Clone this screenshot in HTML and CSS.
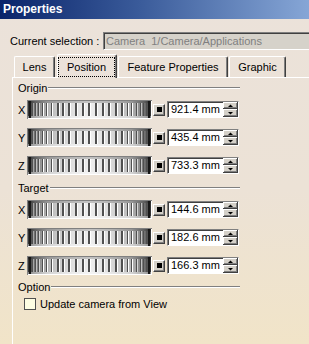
FILE: index.html
```html
<!DOCTYPE html>
<html lang="en">
<head>
    <meta charset="UTF-8">
    <meta name="viewport" content="width=device-width, initial-scale=1.0">
    <title>Properties</title>
    <link rel="stylesheet" href="styles.css">
</head>
<body>
    <!-- shared drawings: thumbwheel and spinner -->
    <svg class="defs" width="0" height="0">
        <defs>
            <linearGradient id="wheel-shade" x1="0" y1="0" x2="1" y2="0">
                <stop offset="0" stop-color="#303030"/>
                <stop offset="0.05" stop-color="#707070"/>
                <stop offset="0.16" stop-color="#b8b8b8"/>
                <stop offset="0.35" stop-color="#dedede"/>
                <stop offset="0.5" stop-color="#eeeeee"/>
                <stop offset="0.65" stop-color="#dedede"/>
                <stop offset="0.84" stop-color="#b8b8b8"/>
                <stop offset="0.95" stop-color="#707070"/>
                <stop offset="1" stop-color="#303030"/>
            </linearGradient>
        </defs>
        <symbol id="wheel" viewBox="0 0 125 19" shape-rendering="crispEdges">
            <rect x="0" y="0" width="125" height="19" fill="#808080"/>
            <rect x="1" y="1" width="124" height="18" fill="#ffffff"/>
            <rect x="1" y="1" width="123" height="17" fill="url(#wheel-shade)"/>
            <rect x="1" y="1" width="123" height="2" fill="#000" opacity="0.18"/>
            <rect x="1" y="16" width="123" height="2" fill="#fff" opacity="0.4"/>
            <rect x="2" y="1" width="2" height="17" fill="#181818"/>
            <rect x="121" y="1" width="2" height="17" fill="#181818"/>
            <g fill="#505050">
                <rect x="5" y="3" width="1" height="13"/>
                <rect x="8" y="3" width="1" height="13"/>
                <rect x="11" y="3" width="1" height="13"/>
                <rect x="15" y="3" width="1" height="13"/>
                <rect x="19" y="3" width="1" height="13"/>
                <rect x="24" y="3" width="1" height="13"/>
                <rect x="30" y="3" width="2" height="13"/>
                <rect x="35" y="3" width="2" height="13"/>
                <rect x="41" y="3" width="2" height="13"/>
                <rect x="48" y="3" width="2" height="13"/>
                <rect x="55" y="3" width="2" height="13"/>
                <rect x="61" y="3" width="2" height="13"/>
                <rect x="68" y="3" width="2" height="13"/>
                <rect x="75" y="3" width="2" height="13"/>
                <rect x="81" y="3" width="2" height="13"/>
                <rect x="88" y="3" width="2" height="13"/>
                <rect x="94" y="3" width="2" height="13"/>
                <rect x="100" y="3" width="1" height="13"/>
                <rect x="104" y="3" width="1" height="13"/>
                <rect x="109" y="3" width="1" height="13"/>
                <rect x="113" y="3" width="1" height="13"/>
                <rect x="116" y="3" width="1" height="13"/>
                <rect x="119" y="3" width="1" height="13"/>
            </g>
            <g fill="#ffffff">
                <rect x="6" y="3" width="1" height="13" opacity="0.4"/>
                <rect x="9" y="3" width="1" height="13" opacity="0.5"/>
                <rect x="12" y="3" width="1" height="13" opacity="0.6"/>
                <rect x="16" y="3" width="1" height="13"/>
                <rect x="20" y="3" width="1" height="13"/>
                <rect x="25" y="3" width="1" height="13"/>
                <rect x="32" y="3" width="1" height="13"/>
                <rect x="37" y="3" width="1" height="13"/>
                <rect x="43" y="3" width="1" height="13"/>
                <rect x="50" y="3" width="1" height="13"/>
                <rect x="57" y="3" width="1" height="13"/>
                <rect x="63" y="3" width="1" height="13"/>
                <rect x="70" y="3" width="1" height="13"/>
                <rect x="77" y="3" width="1" height="13"/>
                <rect x="83" y="3" width="1" height="13"/>
                <rect x="90" y="3" width="1" height="13"/>
                <rect x="96" y="3" width="1" height="13"/>
                <rect x="101" y="3" width="1" height="13"/>
                <rect x="105" y="3" width="1" height="13"/>
                <rect x="110" y="3" width="1" height="13" opacity="0.6"/>
                <rect x="114" y="3" width="1" height="13" opacity="0.5"/>
            </g>
        </symbol>
        <symbol id="spinner" viewBox="0 0 15 15" shape-rendering="crispEdges">
            <rect x="0" y="0" width="15" height="7" fill="#404040"/>
            <rect x="0" y="0" width="14" height="6" fill="#ffffff"/>
            <rect x="1" y="1" width="13" height="5" fill="#808080"/>
            <rect x="1" y="1" width="12" height="4" fill="#d4d0c8"/>
            <polygon points="5,5 10,5 7.5,2.5" fill="#000" shape-rendering="auto"/>
            <rect x="0" y="7" width="15" height="8" fill="#404040"/>
            <rect x="0" y="7" width="14" height="7" fill="#ffffff"/>
            <rect x="1" y="8" width="13" height="6" fill="#808080"/>
            <rect x="1" y="8" width="12" height="5" fill="#d4d0c8"/>
            <polygon points="5,10 10,10 7.5,12.5" fill="#000" shape-rendering="auto"/>
        </symbol>
    </svg>

    <div class="titlebar">Properties</div>

    <div class="selection">
        <span class="selection-label">Current selection :</span>
        <div class="selection-field">Camera  1/Camera/Applications</div>
    </div>

    <div class="tabs">
        <div class="tab tab-lens">Lens</div>
        <div class="tab tab-active"><span class="focus">Position</span></div>
        <div class="tab tab-feature">Feature Properties</div>
        <div class="tab tab-graphic">Graphic</div>
    </div>

    <div class="panel">
        <div class="legend legend-origin"><span>Origin</span></div>
        <div class="rows">
            <div class="row">
                <span class="axis">X</span>
                <svg class="wheel" width="125" height="19"><use href="#wheel"/></svg>
                <span class="dot-btn"></span>
                <div class="spin-edit"><span class="value">921.4 mm</span><svg class="spinner" width="15" height="15"><use href="#spinner"/></svg></div>
            </div>
            <div class="row">
                <span class="axis">Y</span>
                <svg class="wheel" width="125" height="19"><use href="#wheel"/></svg>
                <span class="dot-btn"></span>
                <div class="spin-edit"><span class="value">435.4 mm</span><svg class="spinner" width="15" height="15"><use href="#spinner"/></svg></div>
            </div>
            <div class="row">
                <span class="axis">Z</span>
                <svg class="wheel" width="125" height="19"><use href="#wheel"/></svg>
                <span class="dot-btn"></span>
                <div class="spin-edit"><span class="value">733.3 mm</span><svg class="spinner" width="15" height="15"><use href="#spinner"/></svg></div>
            </div>
        </div>

        <div class="legend legend-target"><span>Target</span></div>
        <div class="rows">
            <div class="row">
                <span class="axis">X</span>
                <svg class="wheel" width="125" height="19"><use href="#wheel"/></svg>
                <span class="dot-btn"></span>
                <div class="spin-edit"><span class="value">144.6 mm</span><svg class="spinner" width="15" height="15"><use href="#spinner"/></svg></div>
            </div>
            <div class="row">
                <span class="axis">Y</span>
                <svg class="wheel" width="125" height="19"><use href="#wheel"/></svg>
                <span class="dot-btn"></span>
                <div class="spin-edit"><span class="value">182.6 mm</span><svg class="spinner" width="15" height="15"><use href="#spinner"/></svg></div>
            </div>
            <div class="row">
                <span class="axis">Z</span>
                <svg class="wheel" width="125" height="19"><use href="#wheel"/></svg>
                <span class="dot-btn"></span>
                <div class="spin-edit"><span class="value">166.3 mm</span><svg class="spinner" width="15" height="15"><use href="#spinner"/></svg></div>
            </div>
        </div>

        <div class="legend legend-option"><span>Option</span></div>
        <label class="check-row">
            <span class="checkbox"></span>
            <span>Update camera from View</span>
        </label>
    </div>
</body>
</html>
```

FILE: styles.css
```css
body {
    margin: 0;
    width: 309px;
    height: 344px;
    overflow: hidden;
    font-family: "Liberation Sans", Arial, sans-serif;
    font-size: 11px;
    color: #000;
    background: linear-gradient(to bottom, #ebe2da 0%, #ece2d6 55%, #f1e4c8 100%);
}
.defs {
    display: block;
    width: 0;
    height: 0;
}
.titlebar {
    height: 19px;
    line-height: 19px;
    padding-left: 3px;
    font-size: 12px;
    font-weight: bold;
    color: #fff;
    background: linear-gradient(to right, #0a246a 0%, #3a5b9a 45%, #86a6d6 100%);
}
.selection {
    display: flex;
    align-items: center;
    margin-top: 13px;
    padding-left: 10px;
    height: 18px;
}
.selection-label {
    width: 93px;
    flex: none;
}
.selection-field {
    flex: 1;
    height: 18px;
    box-sizing: border-box;
    line-height: 16px;
    padding-left: 2px;
    white-space: pre;
    color: #808080;
    background: #d6d2ca;
    border: 1px solid #808080;
    border-right: 0;
    border-bottom-color: #fff;
    box-shadow: inset 1px 1px #404040;
}
.tabs {
    display: flex;
    align-items: flex-end;
    height: 23px;
    margin: 4px 0 0 12px;
    padding-left: 2px;
    border-bottom: 1px solid #fff;
}
.tab {
    height: 21px;
    box-sizing: border-box;
    display: flex;
    align-items: center;
    justify-content: center;
    border-top: 1px solid #fff;
    border-left: 1px solid #fff;
    border-right: 1px solid #404040;
    box-shadow: inset -1px 0 #808080;
    border-radius: 2px 2px 0 0;
}
.tab-lens {
    width: 41px;
}
.tab-active {
    width: 60px;
    height: 24px;
    margin: 0 1px -1px 2px;
    padding: 2px 1px 1px 0;
    background: #ebe2da;
    align-items: stretch;
}
.focus {
    flex: 1;
    display: flex;
    align-items: center;
    justify-content: center;
    border: 1px dotted #000;
}
.tab-feature {
    width: 110px;
    margin-right: 1px;
}
.tab-graphic {
    width: 57px;
}
.panel {
    margin-left: 12px;
    padding: 3px 0 0 5px;
    height: 263px;
    border-left: 1px solid #fff;
}
.legend {
    display: flex;
    align-items: center;
    width: 222px;
    height: 14px;
}
.legend::after {
    content: "";
    flex: 1;
    margin-left: 1px;
    border-top: 1px solid #808080;
    border-bottom: 1px solid #fff;
}
.legend-target {
    margin-top: 6px;
}
.legend-option {
    margin-top: 5px;
}
.rows {
    display: flex;
    flex-direction: column;
    gap: 9px;
    margin-top: 5px;
}
.row {
    display: flex;
    align-items: center;
    height: 19px;
}
.axis {
    width: 9px;
    flex: none;
}
.wheel {
    display: block;
    flex: none;
}
.dot-btn {
    width: 12px;
    height: 12px;
    box-sizing: border-box;
    margin-left: 1px;
    display: flex;
    align-items: center;
    justify-content: center;
    background: #d4d0c8;
    border: 1px solid;
    border-color: #fff #404040 #404040 #fff;
    box-shadow: inset -1px -1px #808080;
}
.dot-btn::after {
    content: "";
    width: 5px;
    height: 5px;
    background: #000;
}
.spin-edit {
    display: flex;
    width: 72px;
    height: 17px;
    box-sizing: border-box;
    margin-left: 2px;
    background: #fff;
    border: 1px solid;
    border-color: #808080 #fff #fff #808080;
}
.value {
    flex: 1;
    line-height: 15px;
    padding-left: 3px;
    box-shadow: inset 1px 1px #404040;
}
.spinner {
    display: block;
    flex: none;
}
.check-row {
    display: flex;
    align-items: center;
    gap: 4px;
    margin: 4px 0 0 6px;
    height: 12px;
}
.checkbox {
    width: 12px;
    height: 12px;
    box-sizing: border-box;
    border: 1px solid #505050;
    background: #fdfde2;
}
```
